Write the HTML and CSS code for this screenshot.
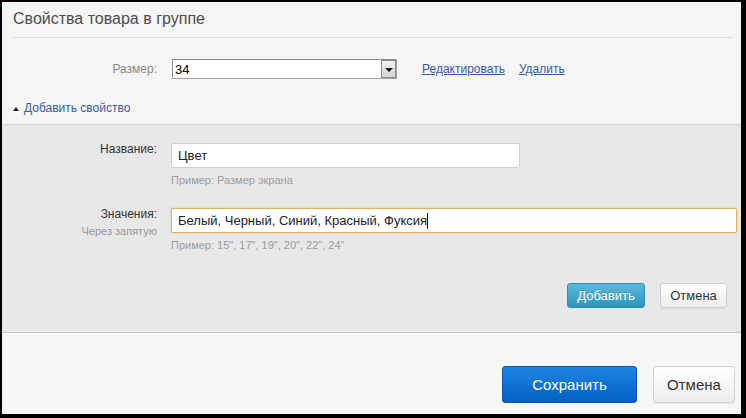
FILE: index.html
```html
<!DOCTYPE html>
<html lang="ru">
<head>
    <meta charset="UTF-8">
    <title>Свойства товара в группе</title>
    <link rel="stylesheet" href="styles.css">
</head>
<body>
    <div class="window">
        <div class="header">
            <h1>Свойства товара в группе</h1>
        </div>

        <div class="prop-row">
            <div class="prop-label">Размер:</div>
            <div class="select">
                <span class="select-value">34</span>
                <span class="select-arrow"><span class="arrow-down"></span></span>
            </div>
            <a href="#" class="prop-link">Редактировать</a>
            <a href="#" class="prop-link">Удалить</a>
        </div>

        <div class="add-toggle">
            <span class="caret-up"></span>
            <a href="#" class="add-link">Добавить свойство</a>
        </div>

        <div class="new-prop">
            <div class="form-row">
                <div class="form-label">
                    <div class="label-main">Название:</div>
                </div>
                <div class="form-field">
                    <div class="text-input name-input">Цвет</div>
                    <div class="hint">Пример: Размер экрана</div>
                </div>
            </div>

            <div class="form-row second">
                <div class="form-label">
                    <div class="label-main">Значения:</div>
                    <div class="label-sub">Через запятую</div>
                </div>
                <div class="form-field wide">
                    <div class="text-input focused">Белый, Черный, Синий, Красный, Фуксия<span class="text-caret"></span></div>
                    <div class="hint">Пример: 15", 17", 19", 20", 22", 24"</div>
                </div>
            </div>

            <div class="form-actions">
                <button class="btn btn-add">Добавить</button>
                <button class="btn btn-light">Отмена</button>
            </div>
        </div>

        <div class="footer">
            <button class="btn btn-save">Сохранить</button>
            <button class="btn btn-light btn-big">Отмена</button>
        </div>
    </div>
</body>
</html>
```

FILE: styles.css
```css
html, body {
    margin: 0;
    padding: 0;
}

body {
    background-color: #000;
    font-family: "Liberation Sans", Arial, sans-serif;
    width: 746px;
    height: 418px;
    overflow: hidden;
}

.window {
    margin: 2px 5px 4px 2px;
    height: 412px;
    background-color: #f5f5f5;
    display: flex;
    flex-direction: column;
}

.header {
    margin: 0 8px 0 10px;
    padding: 7px 0 8px 1px;
    border-bottom: 1px solid #dcdcdc;
}

h1 {
    margin: 0;
    font-size: 16px;
    line-height: 20px;
    font-weight: normal;
    color: #4d4d4d;
}

.prop-row {
    display: flex;
    align-items: center;
    height: 20px;
    margin-top: 21px;
}

.prop-label {
    width: 155px;
    text-align: right;
    font-size: 12px;
    line-height: 16px;
    color: #8a8a8a;
}

.select {
    display: flex;
    align-items: center;
    width: 225px;
    height: 20px;
    margin-left: 15px;
    box-sizing: border-box;
    border: 1px solid #a3a3a3;
    border-top-color: #8c8c8c;
    border-left-color: #8c8c8c;
    background-color: #fff;
}

.select-value {
    flex: 1;
    padding-left: 2px;
    font-size: 13px;
    color: #000;
}

.select-arrow {
    width: 15px;
    height: 18px;
    box-sizing: border-box;
    border: 1px solid #8a8a8a;
    background: linear-gradient(#f2f2f2, #d4d4d4);
    display: flex;
    align-items: center;
    justify-content: center;
}

.arrow-down {
    width: 0;
    height: 0;
    border-left: 4px solid transparent;
    border-right: 4px solid transparent;
    border-top: 4px solid #111;
    margin-top: 1px;
}

.prop-link {
    font-size: 12px;
    color: #3b5aa6;
    text-decoration: underline;
    margin-left: 25px;
}

.prop-link + .prop-link {
    margin-left: 14px;
}

.add-toggle {
    display: flex;
    align-items: center;
    margin-top: 21px;
    padding-left: 11px;
    height: 16px;
}

.caret-up {
    width: 0;
    height: 0;
    border-left: 3px solid transparent;
    border-right: 3px solid transparent;
    border-bottom: 4px solid #222;
    margin-right: 5px;
    margin-top: 1px;
}

.add-link {
    font-size: 12px;
    line-height: 16px;
    color: #3b5aa6;
    text-decoration: none;
}

.new-prop {
    margin-top: 8px;
    padding: 16px 0 24px;
    background-color: #e8e8e8;
    border-top: 1px solid #d6d6d6;
    border-bottom: 1px solid #c6c6c6;
    box-shadow: 0 1px 0 #e2e2e2;
}

.form-row {
    display: flex;
    align-items: flex-start;
}

.form-row.second {
    margin-top: 19px;
}

.form-label {
    width: 155px;
    text-align: right;
    flex-shrink: 0;
}

.label-main {
    font-size: 12px;
    line-height: 16px;
    color: #333;
}

.label-sub {
    font-size: 11px;
    line-height: 14px;
    color: #999;
    margin-top: 2px;
}

.form-field {
    margin-left: 14px;
    padding-top: 2px;
}

.form-field.wide {
    flex: 1;
    margin-right: 4px;
}

.text-input {
    height: 25px;
    box-sizing: border-box;
    padding: 0 6px;
    background-color: #fff;
    border: 1px solid #d2d2d2;
    border-radius: 2px;
    font-size: 13px;
    line-height: 23px;
    color: #222;
    white-space: nowrap;
}

.name-input {
    width: 349px;
}

.text-input.focused {
    border-color: #dcb35c;
    box-shadow: 0 0 2px rgba(220, 170, 70, 0.6);
}

.text-caret {
    display: inline-block;
    width: 1px;
    height: 16px;
    background-color: #000;
    vertical-align: -4px;
}

.hint {
    margin-top: 5px;
    font-size: 11px;
    line-height: 14px;
    color: #9c9c9c;
}

.form-actions {
    display: flex;
    justify-content: flex-end;
    gap: 15px;
    margin-top: 31px;
    padding-right: 14px;
}

.btn {
    font-family: "Liberation Sans", Arial, sans-serif;
    border-radius: 3px;
    cursor: pointer;
    padding: 0;
}

.btn-add {
    width: 78px;
    height: 25px;
    font-size: 13px;
    color: #fff;
    background: linear-gradient(#5ab9d9, #2f96bf);
    border: 1px solid #2f8db3;
    text-shadow: 0 -1px 0 rgba(0, 0, 0, 0.15);
}

.btn-light {
    width: 67px;
    height: 25px;
    font-size: 13px;
    color: #333;
    background: linear-gradient(#ffffff, #ededed);
    border: 1px solid #d0d0d0;
    box-shadow: 0 1px 1px rgba(0, 0, 0, 0.06);
}

.footer {
    flex: 1;
    background-color: #f7f7f7;
    display: flex;
    justify-content: flex-end;
    align-items: flex-start;
    gap: 16px;
    padding: 33px 6px 0 0;
}

.btn-save {
    width: 135px;
    height: 37px;
    font-size: 15px;
    color: #fff;
    background: linear-gradient(#1c85e2, #0460c4);
    border: 1px solid #0a59ad;
}

.btn-big {
    width: 82px;
    height: 37px;
    font-size: 15px;
}
```
